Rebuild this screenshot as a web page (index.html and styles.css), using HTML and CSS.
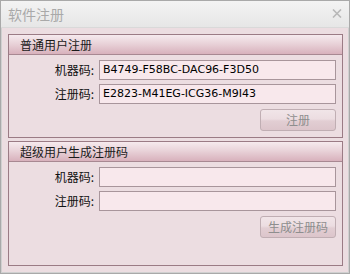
FILE: index.html
```html
<!DOCTYPE html>
<html>
<head>
<meta charset="utf-8">
<link rel="stylesheet" href="styles.css">
</head>
<body>
<div class="window">
  <div class="titlebar">
    <span class="title">软件注册</span>
    <svg class="close" width="10" height="9" viewBox="0 0 10 9"><path d="M1 0.5 L9 8.5 M9 0.5 L1 8.5" stroke="#b8b8b8" stroke-width="1.6" fill="none"/></svg>
  </div>
  <div class="main">
    <div class="group">
      <div class="group-head">普通用户注册</div>
      <div class="group-body">
        <label class="lbl">机器码:</label>
        <div class="field">B4749-F58BC-DAC96-F3D50</div>
        <label class="lbl">注册码:</label>
        <div class="field">E2823-M41EG-ICG36-M9I43</div>
        <div class="actions"><button class="btn">注册</button></div>
      </div>
    </div>
    <div class="group grow">
      <div class="group-head">超级用户生成注册码</div>
      <div class="group-body">
        <label class="lbl">机器码:</label>
        <div class="field"></div>
        <label class="lbl">注册码:</label>
        <div class="field"></div>
        <div class="actions"><button class="btn">生成注册码</button></div>
      </div>
    </div>
  </div>
</div>
</body>
</html>
```
FILE: styles.css
```css
html, body {
  margin: 0;
  padding: 0;
  background: #ffffff;
}
.window {
  width: 350px;
  height: 274px;
  box-sizing: border-box;
  border: 1px solid #a9a9a9;
  box-shadow: inset 1px 0 0 #f4f4f4, inset -1px 0 0 #f4f4f4, inset 0 -1px 0 #f4f4f4;
  background: #ecdde1;
  display: flex;
  flex-direction: column;
  font-family: "Noto Sans CJK SC", sans-serif;
}
.titlebar {
  height: 27px;
  flex: none;
  display: flex;
  align-items: center;
  justify-content: space-between;
  padding: 0 7px 0 7px;
  background: linear-gradient(#f3f3f3, #e6e6e6);
  border-bottom: 1px solid #d9d9d9;
  box-sizing: border-box;
}
.title {
  font-size: 14px;
  color: #a9a9a9;
  line-height: 1;
  margin-top: -1px;
}
.close {
  display: block;
  margin-top: -2px;
}
.main {
  flex: 1;
  display: flex;
  flex-direction: column;
  gap: 3px;
  padding: 6px 5px 6px 6px;
  border-left: 1px solid #d0d0d0;
  border-right: 1px solid #d0d0d0;
  border-bottom: 1px solid #d0d0d0;
}
.group {
  border: 1px solid #9b7b85;
  background: #ecdde1;
  display: flex;
  flex-direction: column;
}
.grow {
  flex: 1;
}
.group-head {
  height: 19px;
  border-bottom: 1px solid #a88892;
  background: linear-gradient(#f6eaee, #e9d3d9 45%, #d8b1bc);
  font-size: 12px;
  line-height: 19px;
  color: #1a1a1a;
  padding-left: 11px;
}
.group-body {
  display: grid;
  grid-template-columns: 85px 1fr;
  column-gap: 5px;
  row-gap: 4px;
  padding: 5px 6px 6px 0;
}
.lbl {
  text-align: right;
  font-size: 12px;
  color: #111;
  line-height: 20px;
  height: 20px;
}
.field {
  height: 20px;
  box-sizing: border-box;
  border: 1px solid #a8959b;
  background: #f8e8ec;
  font-family: "DejaVu Sans", sans-serif;
  font-size: 11px;
  line-height: 18px;
  color: #000;
  padding-left: 3px;
}
.actions {
  grid-column: 2;
  display: flex;
  justify-content: flex-end;
  padding-top: 1px;
}
.btn {
  width: 76px;
  height: 22px;
  box-sizing: border-box;
  border: 1px solid #c0aeb3;
  border-radius: 3px;
  background: linear-gradient(#f1e5e8, #ecdde1 45%, #e2ced3 55%, #dcc5cb);
  font-family: "Noto Sans CJK SC", sans-serif;
  font-size: 12px;
  color: #8e8e8e;
  padding: 0;
  line-height: 20px;
}
```
